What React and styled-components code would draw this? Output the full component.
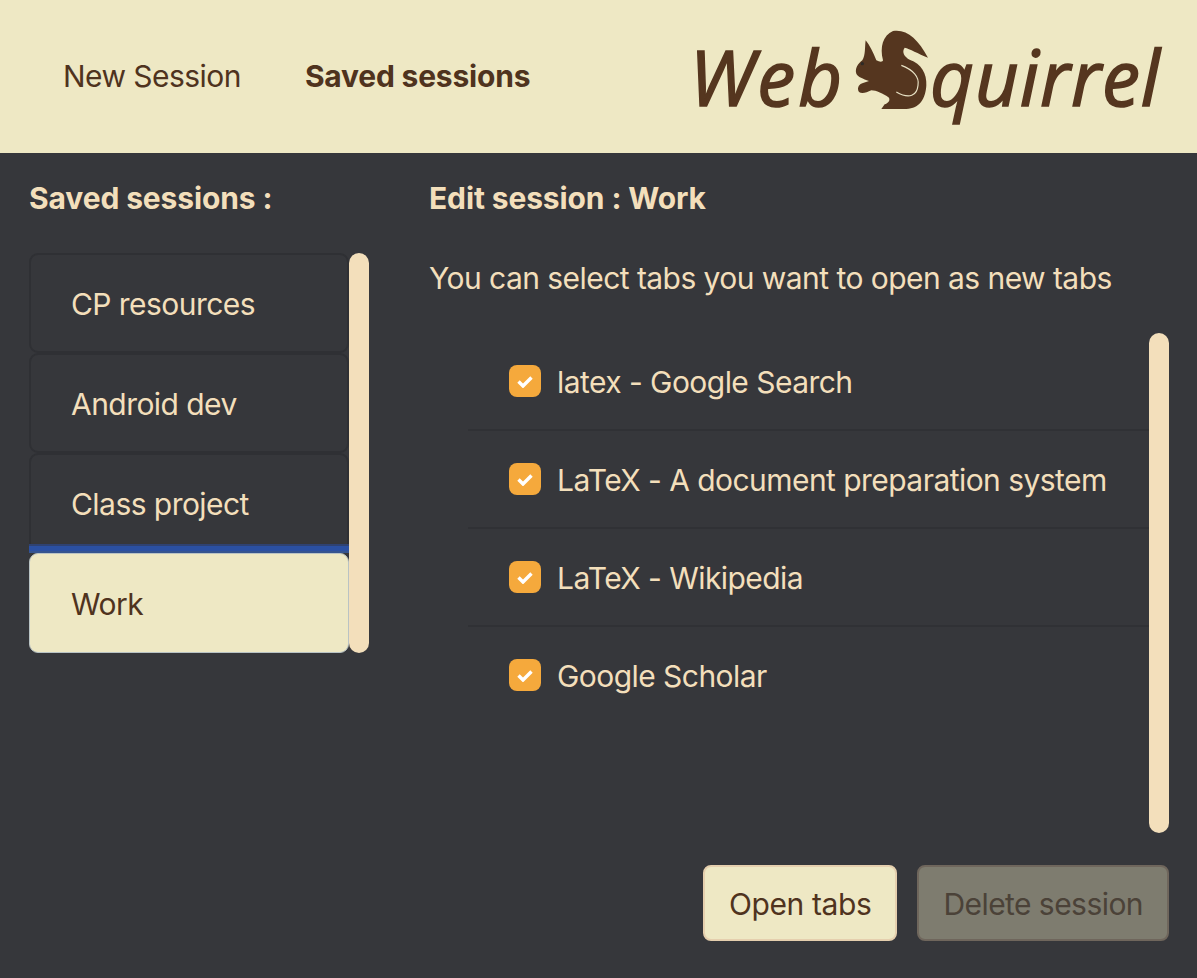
import React from "react";
import styled, { createGlobalStyle } from "styled-components";

const Global = createGlobalStyle`
  html, body { margin: 0; padding: 0; background: #36373b; }
  * { box-sizing: border-box; }
`;

const Page = styled.div`
  width: 1197px;
  height: 978px;
  background: #36373b;
  color: #f3dfbb;
  font-family: Inter, "Liberation Sans", sans-serif;
  font-size: 30px;
  letter-spacing: -0.55px;
  overflow: hidden;
`;

const Header = styled.header`
  height: 153px;
  background: #eee8c4;
  display: flex;
  align-items: center;
  justify-content: space-between;
  padding: 0 36px 0 63px;
  color: #4f331e;
`;

const Nav = styled.nav`
  display: flex;
  gap: 64px;
  margin-top: -2px;
`;

const NavLink = styled.span`
  font-weight: ${(p) => (p.$active ? 700 : 400)};
  letter-spacing: ${(p) => (p.$active ? "-0.2px" : "-0.55px")};
  line-height: 36px;
`;

const Logo = styled.div`
  display: flex;
  align-items: flex-start;
  height: 100px;
  margin-top: 1px;
  color: #55361f;
`;

const LogoWord = styled.span`
  font-family: "Open Sans", "Liberation Sans", sans-serif;
  font-style: italic;
  font-size: 76px;
  font-weight: 400;
  line-height: 100px;
  -webkit-text-stroke: 1.6px #55361f;
  letter-spacing: ${(p) => p.$spacing}px;
`;

const SquirrelMark = styled.svg`
  width: 80px;
  height: 100px;
  margin: 0 -3px 0 8px;
  flex: none;
`;

const Main = styled.main`
  display: flex;
  padding: 0 28px 0 29px;
`;

const SessionsColumn = styled.section`
  width: 400px;
  flex: none;
`;

const EditColumn = styled.section`
  flex: 1;
  min-width: 0;
`;

const Title = styled.h2`
  margin: 0;
  padding-top: 27px;
  font-size: 30px;
  line-height: 36px;
  font-weight: 700;
  letter-spacing: -0.12px;
`;

const Scroller = styled.div`
  display: flex;
  align-items: stretch;
`;

const Thumb = styled.div`
  width: 20px;
  flex: none;
  border-radius: 10px;
  background: #f3dfbb;
`;

const SessionList = styled.ul`
  list-style: none;
  margin: 37px 0 0;
  padding: 0;
  width: 320px;
`;

const SessionScroller = styled(Scroller)`
  width: 340px;
  & > ${Thumb} {
    margin-top: 37px;
  }
`;

const SessionItem = styled.li`
  height: 100px;
  display: flex;
  align-items: center;
  padding: 2px 0 0 40px;
  border-radius: 9px;
  border: 2px solid ${(p) => (p.$active ? "#b9c3c4" : "#2f3034")};
  background: ${(p) => (p.$active ? "#eee8c4" : "transparent")};
  color: ${(p) => (p.$active ? "#4f331e" : "#f3dfbb")};
  ${(p) => p.$active && "border-width: 1px; padding-left: 41px;"}
`;

const ActiveWrap = styled.div`
  position: relative;
  &::before {
    content: "";
    position: absolute;
    left: 0;
    right: 0;
    top: -9px;
    height: 9px;
    background: linear-gradient(#2f4272 0 2px, #2b50a2 2px 7px, #35548f 7px);
  }
`;

const Description = styled.p`
  margin: 0;
  padding-top: 44px;
  line-height: 36px;
`;

const TabsScroller = styled(Scroller)`
  margin-top: 37px;
  height: 500px;
  justify-content: space-between;
`;

const TabList = styled.ul`
  list-style: none;
  margin: 0 0 0 39px;
  padding: 0;
  flex: 1;
`;

const TabItem = styled.li`
  height: 98px;
  display: flex;
  align-items: center;
  gap: 16px;
  padding-left: 41px;
  border-bottom: 2px solid ${(p) => (p.$last ? "transparent" : "#303135")};
`;

const TabLabel = styled.span`
  padding-top: 2px;
`;

const CheckBox = styled.span`
  width: 32px;
  height: 32px;
  flex: none;
  border-radius: 8px;
  background: #f5a93c;
  display: flex;
  align-items: center;
  justify-content: center;
`;

const Actions = styled.div`
  display: flex;
  justify-content: flex-end;
  gap: 20px;
  margin-top: 32px;
`;

const Button = styled.button`
  height: 76px;
  padding: 2px 24px 0;
  border-radius: 8px;
  font: inherit;
  letter-spacing: ${(p) => (p.$disabled ? "-0.55px" : "-0.4px")};
  border: 2px solid ${(p) => (p.$disabled ? "#6f665c" : "#e5cfae")};
  background: ${(p) => (p.$disabled ? "#7e7c6f" : "#eee8c4")};
  color: ${(p) => (p.$disabled ? "#4b4238" : "#4f331e")};
`;

const sessions = ["CP resources", "Android dev", "Class project"];
const tabs = [
  "latex - Google Search",
  "LaTeX - A document preparation system",
  "LaTeX - Wikipedia",
  "Google Scholar",
];

function Squirrel() {
  return (
    <SquirrelMark viewBox="520 50 240 300" aria-hidden="true">
      <path
        fill="#55361f"
        d="M610 150 C600 110 610 75 640 62 C680 55 715 85 745 142 C715 130 690 115 675 112 C665 125 675 140 690 148 C725 160 742 190 740 225 C738 265 720 295 680 296 L605 296 L615 282 C625 278 632 272 628 262 C610 250 590 240 575 240 C560 248 545 250 538 245 C530 232 540 220 550 218 L568 212 C550 205 535 200 530 190 C525 175 535 160 548 150 C558 135 555 110 558 90 C570 105 580 125 590 150 C600 156 610 155 610 150 Z"
      />
      <path
        fill="none"
        stroke="#e9e3c6"
        strokeWidth="3.5"
        d="M665 165 C700 178 720 200 715 225 C712 255 690 268 650 245"
      />
      <circle cx="548" cy="160" r="5" fill="#2e2a26" />
    </SquirrelMark>
  );
}

export default function App() {
  return (
    <Page>
      <Global />
      <Header>
        <Nav>
          <NavLink>New Session</NavLink>
          <NavLink $active>Saved sessions</NavLink>
        </Nav>
        <Logo>
          <LogoWord $spacing={3}>Web</LogoWord>
          <Squirrel />
          <LogoWord $spacing={1}>quirrel</LogoWord>
        </Logo>
      </Header>
      <Main>
        <SessionsColumn>
          <Title>Saved sessions :</Title>
          <SessionScroller>
            <SessionList>
              {sessions.map((s) => (
                <SessionItem key={s}>{s}</SessionItem>
              ))}
              <ActiveWrap>
                <SessionItem $active>Work</SessionItem>
              </ActiveWrap>
            </SessionList>
            <Thumb />
          </SessionScroller>
        </SessionsColumn>
        <EditColumn>
          <Title>Edit session : Work</Title>
          <Description>You can select tabs you want to open as new tabs</Description>
          <TabsScroller>
            <TabList>
              {tabs.map((t, i) => (
                <TabItem key={t} $last={i === tabs.length - 1}>
                  <CheckBox>
                    <svg width="16" height="13" viewBox="0 0 16 13" aria-hidden="true">
                      <path d="M1.5 6.5 L6 11 L14.5 2.5" fill="none" stroke="#fff" strokeWidth="3.4" />
                    </svg>
                  </CheckBox>
                  <TabLabel>{t}</TabLabel>
                </TabItem>
              ))}
            </TabList>
            <Thumb />
          </TabsScroller>
          <Actions>
            <Button>Open tabs</Button>
            <Button $disabled>Delete session</Button>
          </Actions>
        </EditColumn>
      </Main>
    </Page>
  );
}
